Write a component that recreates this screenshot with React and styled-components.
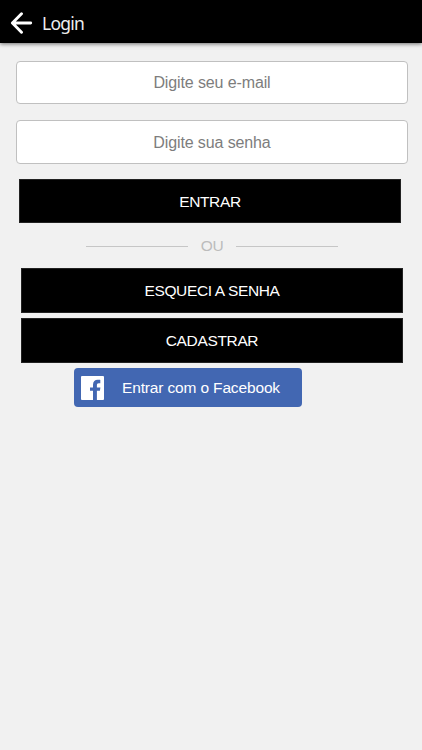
import React from "react";
import styled, { createGlobalStyle } from "styled-components";

const GlobalStyle = createGlobalStyle`
  * {
    box-sizing: border-box;
  }
  body {
    margin: 0;
    background-color: #f1f1f1;
    font-family: "Liberation Sans", Arial, sans-serif;
    font-size: 15.5px;
  }
`;
const Header = styled.header`
  display: flex;
  align-items: center;
  height: 43px;
  padding: 2px 0 0 10px;
  background-color: #000;
  box-shadow: 0 1px 4px rgba(0, 0, 0, 0.55);
`;
const BackButton = styled.button`
  display: flex;
  padding: 0;
  border: 0;
  background: none;
`;
const Title = styled.h1`
  margin: 0 0 0 9px;
  color: #eee;
  font-family: "Noto Sans", sans-serif;
  font-size: 17.5px;
  font-weight: 400;
  letter-spacing: -0.75px;
`;
const Form = styled.form`
  display: flex;
  flex-direction: column;
  padding: 18px 14px 0 16px;
`;
const Field = styled.input`
  height: ${props => props.$height};
  margin-bottom: ${props => props.$gap};
  padding: 1px 10px 0;
  border: 1px solid #c0c0c0;
  border-radius: 4px;
  background-color: #fff;
  font: inherit;
  font-size: 16px;
  letter-spacing: -0.12px;
  text-align: center;
  &::placeholder {
    color: #7d7d7d;
    opacity: 1;
  }
`;
const Button = styled.button`
  width: 382px;
  height: ${props => props.$height || "44px"};
  margin-left: ${props => props.$indent || "5px"};
  margin-bottom: 5px;
  padding: 1px 0 0;
  border: 1px solid #222;
  background-color: #000;
  color: #fff;
  font: inherit;
  letter-spacing: -0.35px;
`;
const Divider = styled.div`
  display: flex;
  align-items: center;
  justify-content: space-between;
  width: 252px;
  height: 36px;
  margin: 0 0 4px 70px;
  color: #bcbcbc;
  letter-spacing: -0.3px;
`;
const Line = styled.span`
  width: 102px;
  height: 1px;
  background-color: #c6c6c6;
`;
const FacebookButton = styled.button`
  display: flex;
  align-items: center;
  width: 228px;
  height: 39px;
  margin-left: 58px;
  padding: 0 0 0 7px;
  border: 0;
  border-radius: 4px;
  background-color: #4267b2;
  color: #fff;
  font: inherit;
`;
const FacebookLabel = styled.span`
  margin-left: 18px;
  letter-spacing: -0.15px;
`;

const BackArrow = () => (
  <svg
    width="23"
    height="22"
    viewBox="0 0 23 22"
    fill="none"
    stroke="#fff"
    strokeWidth="2.9"
    strokeLinecap="round"
    strokeLinejoin="round"
  >
    <path d="M11.5 1.8 2.4 11l9.1 9.2M2.500 11h18.200" />
  </svg>
);

const FacebookLogo = () => (
  <svg width="23" height="24" viewBox="0 0 23 24">
    <rect width="23" height="24" rx="1" fill="#fff" />
    <path
      fill="#4267b2"
      d="M12 24v-9.200H9v-3.400h3V8.700C12 5.500 14 3.800 16.700 3.800c1.200 0 2.200.1 2.600.1v3.300h-1.500c-1.500 0-1.900.8-1.900 1.900v2.300h3.500l-.5 3.400h-3V24z"
    />
  </svg>
);

const App = () => (
  <>
    <GlobalStyle />
    <Header>
      <BackButton type="button">
        <BackArrow />
      </BackButton>
      <Title>Login</Title>
    </Header>
    <Form>
      <Field $height="43px" $gap="16px" type="email" placeholder="Digite seu e-mail" />
      <Field $height="44px" $gap="15px" type="password" placeholder="Digite sua senha" />
      <Button $indent="3px" type="submit">ENTRAR</Button>
      <Divider>
        <Line />
        OU
        <Line />
      </Divider>
      <Button $height="45px" type="button">ESQUECI A SENHA</Button>
      <Button $height="45px" type="button">CADASTRAR</Button>
      <FacebookButton type="button">
        <FacebookLogo />
        <FacebookLabel>Entrar com o Facebook</FacebookLabel>
      </FacebookButton>
    </Form>
  </>
);

export default App;
